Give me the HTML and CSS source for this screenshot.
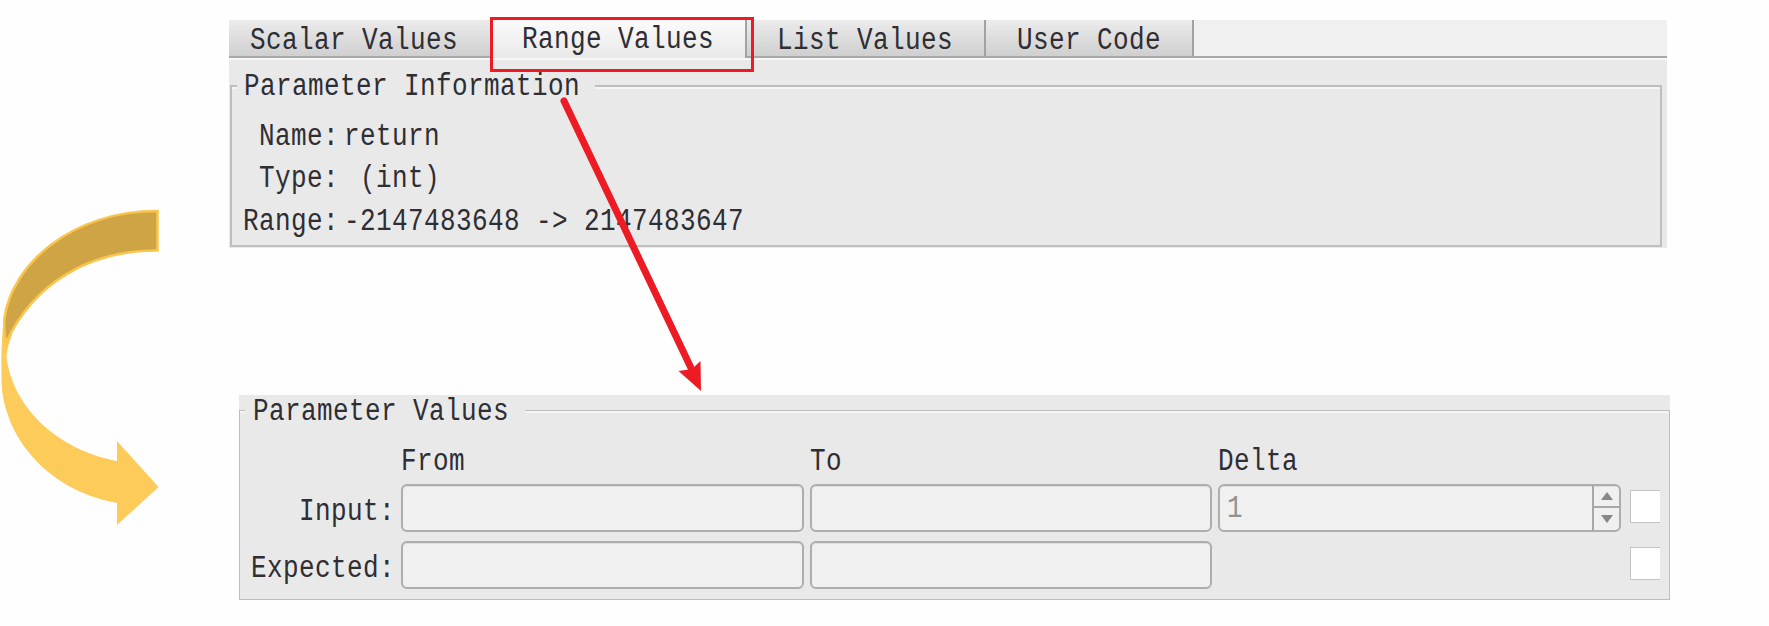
FILE: index.html
```html
<!DOCTYPE html>
<html lang="en">
<head>
<meta charset="utf-8">
<title>Range Values</title>
<link rel="stylesheet" href="styles.css">
</head>
<body>
<main class="page">
  <svg class="flow-arrow" viewBox="0 0 165 626" aria-hidden="true">
    <path class="arrow-front" d="M4 318C1 340 1 370 2 390C9 447 56 492 117 503V525L158.500 487L117 441V461C59 450 13 409 6.500 357Q7 347 12 335Z"/>
    <path class="arrow-back" d="M157.500 211V250.500C90 250 33 283 6 343Q3.500 332 4.500 318C12 264 72 211 157.500 211Z"/>
  </svg>
  <div class="panels">
    <section class="info-panel">
      <nav class="tabs">
        <div class="tab tab-first"><span class="txt">Scalar Values</span></div>
        <div class="tab tab-active"><span class="txt">Range Values</span></div>
        <div class="tab tab-list"><span class="txt">List Values</span></div>
        <div class="tab tab-code"><span class="txt">User Code</span></div>
        <div class="tab-rest"></div>
      </nav>
      <div class="tab-body">
        <div class="group info-group">
          <h2 class="legend"><span class="txt">Parameter Information</span></h2>
          <dl class="info">
            <dt><span class="txt">Name:</span></dt><dd><span class="txt">return</span></dd>
            <dt><span class="txt">Type:</span></dt><dd><span class="txt"> (int)</span></dd>
            <dt><span class="txt">Range:</span></dt><dd><span class="txt">-2147483648 -&gt; 2147483647</span></dd>
          </dl>
        </div>
      </div>
    </section>
    <section class="values-panel">
      <div class="group values-group">
        <h2 class="legend"><span class="txt">Parameter Values</span></h2>
        <div class="values">
          <span></span>
          <div class="head"><span class="txt">From</span></div>
          <div class="head"><span class="txt">To</span></div>
          <div class="head"><span class="txt">Delta</span></div>
          <span></span>
          <div class="label"><span class="txt">Input:</span></div>
          <div class="field"></div>
          <div class="field"></div>
          <div class="field spin">
            <span class="txt spin-value">1</span>
            <div class="spin-buttons"><i class="up"></i><i class="down"></i></div>
          </div>
          <div class="check"></div>
          <div class="label"><span class="txt">Expected:</span></div>
          <div class="field"></div>
          <div class="field"></div>
          <span></span>
          <div class="check"></div>
        </div>
      </div>
    </section>
  </div>
  <svg class="callout" viewBox="0 0 1769 626" aria-hidden="true">
    <rect x="491.500" y="18.500" width="261" height="52"/>
    <path class="shaft" d="M564 101L692 370"/>
    <path class="tip" d="M701 391L678.500 371L692 369L700.500 361Z"/>
  </svg>
</main>
</body>
</html>
```
FILE: styles.css
```css
* { box-sizing: border-box; }
body { margin: 0; background: #fefefe; }
.page {
  position: relative;
  display: flex;
  width: 1769px;
  height: 626px;
  overflow: hidden;
  font: 26px/32px "Liberation Mono", monospace;
  letter-spacing: 0.4px;
  color: #2e2e34;
}
.txt {
  display: inline-block;
  white-space: pre;
  transform: scaleY(1.2);
  transform-origin: 50% 75%;
}
.flow-arrow { flex: none; width: 165px; height: 626px; }
.arrow-back { fill: #cfa445; stroke: #fac54d; stroke-width: 2.5; }
.arrow-front { fill: #fdcb59; }

.panels { padding: 20px 0 0 64px; }
.info-panel { width: 1438px; height: 228px; background: #e9e9e9; }
.tabs { display: flex; height: 38px; }
.tab {
  padding: 6px 0 0 21px;
  background: linear-gradient(#ececec, #cfcfcf);
  border-right: 2px solid #a2a2a2;
  border-bottom: 2px solid #a8a8a8;
}
.tab-first { width: 262px; border-right: 0; }
.tab-active {
  width: 256px;
  padding: 5px 0 0 31px;
  background: linear-gradient(#fbfbfb, #e9e9e9);
  border-bottom: 0;
}
.tab-list { width: 239px; padding-left: 30px; }
.tab-code { width: 208px; padding-left: 31px; }
.tab-rest { flex: 1; background: #f0f0f0; border-bottom: 2px solid #a8a8a8; }
.tab-body { padding: 25px 5px 0 1px; border-top: 2px solid #f7f7f7; }

.group { border: 2px solid #bebebe; box-shadow: inset 0 2px #f5f5f5; }
.legend {
  width: max-content;
  margin: -15px 0 0 5px;
  padding: 0 15px 0 7px;
  background: #e9e9e9;
  font: inherit;
}
.info-group { height: 162px; }
.info {
  display: grid;
  grid-template-columns: 107px auto;
  grid-auto-rows: 42.3px;
  column-gap: 5px;
  margin: 18px 0 0;
}
.info dt { text-align: right; }
.info dd { margin: 0; }

.values-panel {
  width: 1431px;
  height: 205px;
  margin: 147px 0 0 10px;
  padding-top: 15px;
  background: #e9e9e9;
}
.values-group { height: 190px; border-width: 1.5px; }
.values-group .legend { margin-top: -14px; padding: 0 16px 0 8px; }
.values {
  display: grid;
  grid-template-columns: 155px 403px 402px 403px 31px;
  grid-template-rows: 48px 48px 48px;
  column-gap: 6px;
  row-gap: 9px;
  margin-top: 7px;
}
.values > :nth-child(n+6) { margin-top: -9px; margin-bottom: 9px; }
.values .head { padding-top: 11px; }
.label { padding-top: 13px; text-align: right; }
.field {
  background: #f0f0f0;
  border: 2px solid #adadad;
  border-radius: 6px;
  box-shadow: inset 0 1px #dedede;
}
.spin { display: flex; justify-content: space-between; padding-left: 7px; color: #929292; }
.spin-value { margin-top: 9px; }
.spin-buttons { display: grid; grid-template-rows: 20px 1fr; width: 27px; border-left: 2px solid #a8a8a8; }
.spin-buttons i { display: grid; place-items: center; }
.spin-buttons .down { border-top: 2px solid #a8a8a8; }
.spin-buttons i::after { content: ""; border: 6.5px solid transparent; }
.up::after { margin-top: -6px; border-bottom: 8px solid #888 !important; }
.down::after { margin-top: 5px; border-top: 8px solid #888 !important; }
.values > .check {
  width: 30px;
  height: 33px;
  margin: -3px 0 0 3px;
  background: #fff;
  border: 1.5px solid #c4c4c4;
  border-right: 0;
}

.callout { position: absolute; inset: 0; width: 1769px; height: 626px; fill: none; stroke: #ed1c24; }
.callout rect { stroke-width: 3; }
.shaft { stroke-width: 7; stroke-linecap: round; }
.tip { fill: #ed1c24; stroke: none; }
```
